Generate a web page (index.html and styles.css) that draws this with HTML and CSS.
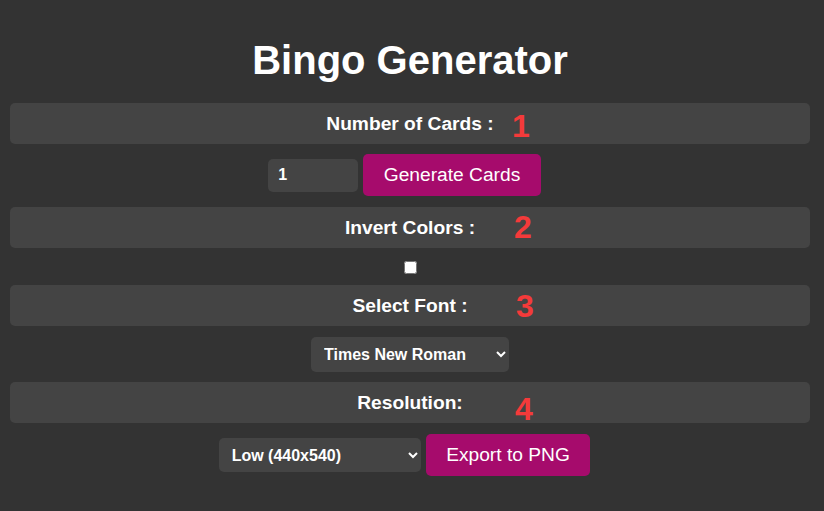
FILE: index.html
```html
<!DOCTYPE html>
<html lang="en">
<head>
<meta charset="utf-8">
<title>Bingo Generator</title>
<link rel="stylesheet" href="styles.css">
</head>
<body>
<main class="app">
  <h1 class="title">Bingo Generator</h1>

  <div class="bar">
    <span class="bar-label">Number of Cards :</span>
    <span class="mark mark-1">1</span>
  </div>
  <div class="row row-pair">
    <input class="num-input" type="number" value="1" min="1">
    <button class="btn" type="button">Generate Cards</button>
  </div>

  <div class="bar">
    <span class="bar-label">Invert Colors :</span>
    <span class="mark mark-2">2</span>
  </div>
  <div class="row row-check">
    <input class="check" type="checkbox">
  </div>

  <div class="bar">
    <span class="bar-label">Select Font :</span>
    <span class="mark mark-3">3</span>
  </div>
  <div class="row row-font">
    <select class="select select-font">
      <option>Times New Roman</option>
      <option>Arial</option>
      <option>Courier New</option>
    </select>
  </div>

  <div class="bar">
    <span class="bar-label">Resolution:</span>
    <span class="mark mark-4">4</span>
  </div>
  <div class="row row-pair row-res">
    <select class="select select-res">
      <option>Low (440x540)</option>
      <option>Medium (880x1080)</option>
      <option>High (1760x2160)</option>
    </select>
    <button class="btn" type="button">Export to PNG</button>
  </div>
</main>
</body>
</html>
```

FILE: styles.css
```css
* {
  box-sizing: border-box;
}

html, body {
  margin: 0;
  background: #333333;
}

body {
  font-family: "Liberation Sans", Arial, sans-serif;
  color: #ffffff;
}

.app {
  padding: 37px 14px 0 10px;
}

.title {
  margin: 0 0 20px;
  font-size: 40px;
  line-height: 46px;
  font-weight: bold;
  text-align: center;
  color: #ffffff;
}

.bar {
  position: relative;
  height: 41px;
  background: #444444;
  border-radius: 5px;
  text-align: center;
  line-height: 41px;
}

.bar-label {
  font-size: 19.2px;
  font-weight: bold;
  color: #ffffff;
}

.mark {
  position: absolute;
  font-size: 32px;
  line-height: 32px;
  font-weight: bold;
  color: #f43a3a;
}

.mark-1 { left: 502px; top: 7px; }
.mark-2 { left: 504px; top: 4px; }
.mark-3 { left: 506px; top: 5px; }
.mark-4 { left: 505px; top: 11px; }

.row {
  display: flex;
  justify-content: center;
  align-items: center;
}

.row-pair {
  gap: 5px;
  padding: 10px 11px 11px 0;
}

.row-res {
  padding-top: 11px;
  padding-bottom: 0;
}

.row-check {
  padding: 13px 0 11px;
}

.row-font {
  padding: 11px 0 10px;
}

.num-input {
  width: 90px;
  height: 33px;
  padding: 0 10px;
  border: none;
  border-radius: 5px;
  background: #444444;
  color: #ffffff;
  font-family: "Liberation Sans", Arial, sans-serif;
  font-size: 16px;
  font-weight: bold;
  outline: none;
}

.num-input::-webkit-inner-spin-button,
.num-input::-webkit-outer-spin-button {
  -webkit-appearance: none;
  margin: 0;
}

.btn {
  height: 42px;
  padding: 0 20.5px;
  border: none;
  border-radius: 5px;
  background: #a60b6c;
  color: #ffffff;
  font-family: "Liberation Sans", Arial, sans-serif;
  font-size: 19.2px;
  cursor: pointer;
}

.check {
  width: 13px;
  height: 13px;
  margin: 0;
}

.select {
  height: 35px;
  padding: 0 6px 0 9px;
  border: none;
  border-radius: 5px;
  background: #444444;
  color: #ffffff;
  font-family: "Liberation Sans", Arial, sans-serif;
  font-size: 16px;
  font-weight: bold;
  outline: none;
}

.select-font {
  width: 198px;
}

.select-res {
  width: 202px;
  height: 34px;
}
```
